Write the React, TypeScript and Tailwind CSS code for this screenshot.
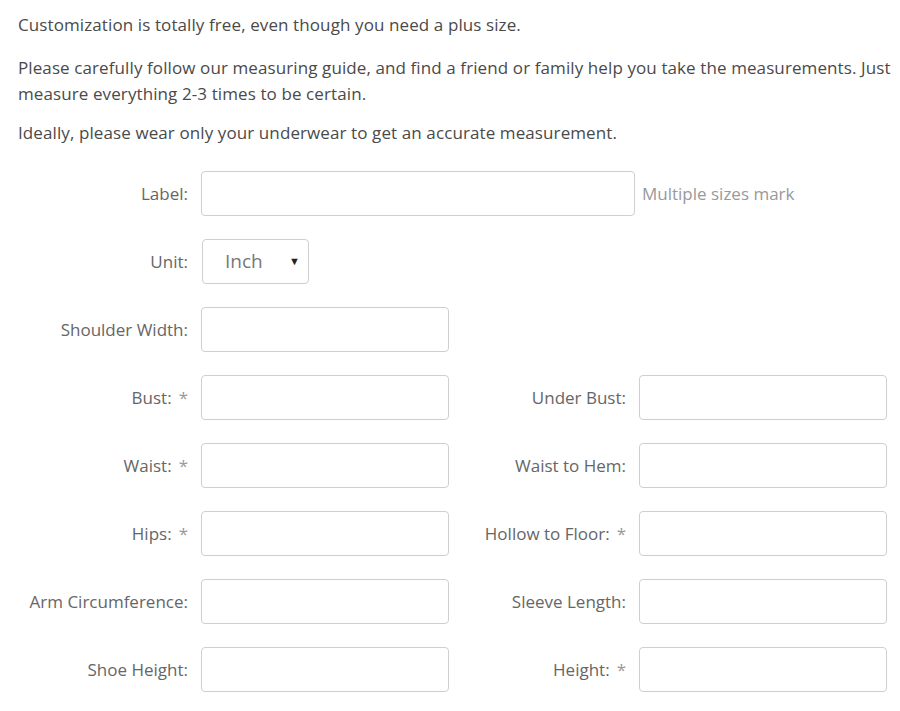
const font = { fontFamily: '"Open Sans", "Liberation Sans", sans-serif' }

type Field = { label: string; required?: boolean }

const rows: [Field, Field?][] = [
  [{ label: 'Bust:', required: true }, { label: 'Under Bust:' }],
  [{ label: 'Waist:', required: true }, { label: 'Waist to Hem:' }],
  [{ label: 'Hips:', required: true }, { label: 'Hollow to Floor:', required: true }],
  [{ label: 'Arm Circumference:' }, { label: 'Sleeve Length:' }],
  [{ label: 'Shoe Height:' }, { label: 'Height:', required: true }],
]

function FieldLabel({ field, width }: { field: Field; width: string }) {
  return (
    <label className={`${width} shrink-0 whitespace-nowrap text-right text-[17px] text-[#666]`}>
      {field.label}
      {field.required && <span className="ml-[7px] text-[#999]">*</span>}
    </label>
  )
}

function TextBox({ width = 'w-[248px]' }: { width?: string }) {
  return (
    <input
      type="text"
      className={`${width} ml-[13px] h-[45px] shrink-0 rounded-[4px] border border-[#cfcfcf] bg-white px-3 text-[15px] text-[#555] outline-none`}
    />
  )
}

export default function App() {
  return (
    <div className="min-h-[711px] bg-white" style={font}>
      {/* intro */}
      <div className="pl-[18px] pr-[6px] pt-[12px] text-[17px] leading-[26px] tracking-[0.1px] text-[#4a4a4a]">
        <p>Customization is totally free, even though you need a plus size.</p>
        <p className="mt-[17px]">
          Please carefully follow our measuring guide, and find a friend or family help you take the measurements. Just
          measure everything 2-3 times to be certain.
        </p>
        <p className="mt-[13px]">Ideally, please wear only your underwear to get an accurate measurement.</p>
      </div>

      {/* form */}
      <div className="mt-[25px] flex flex-col gap-[23px]">
        <div className="flex items-center">
          <FieldLabel field={{ label: 'Label:' }} width="w-[188px]" />
          <TextBox width="w-[434px]" />
          <span className="ml-[7px] text-[17px] text-[#999]">Multiple sizes mark</span>
        </div>

        <div className="flex items-center">
          <FieldLabel field={{ label: 'Unit:' }} width="w-[188px]" />
          <div className="relative ml-[14px] flex h-[45px] w-[107px] items-center rounded-[4px] border border-[#cfcfcf] bg-white pl-[22px]">
            <span className="text-[19px] text-[#777]">Inch</span>
            <span className="absolute right-[8px] top-[13px] text-[11px] text-[#222]">▼</span>
          </div>
        </div>

        <div className="flex items-center">
          <FieldLabel field={{ label: 'Shoulder Width:' }} width="w-[188px]" />
          <TextBox />
        </div>

        {rows.map(([left, right], i) => (
          <div key={i} className="flex items-center">
            <FieldLabel field={left} width="w-[188px]" />
            <TextBox />
            {right && (
              <>
                <FieldLabel field={right} width="w-[177px]" />
                <TextBox />
              </>
            )}
          </div>
        ))}
      </div>
    </div>
  )
}
